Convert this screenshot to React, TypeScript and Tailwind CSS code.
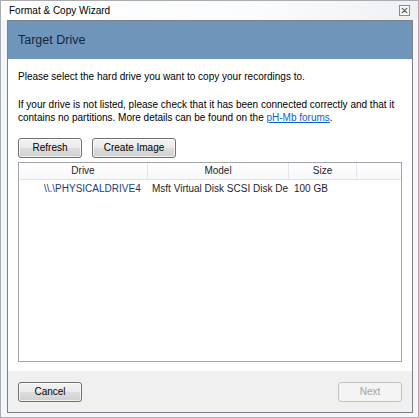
import type { ReactNode } from "react";

type ButtonProps = {
  children: ReactNode;
  width: string;
  disabled?: boolean;
};

// Aero-style push button with the two-tone gradient face
function AeroButton({ children, width, disabled }: ButtonProps) {
  if (disabled) {
    return (
      <button
        disabled
        className={`${width} h-[20px] rounded-[3px] border border-[#c2c2c2] bg-[#f4f4f4] text-[10px] leading-none text-[#a3a3a3]`}
      >
        {children}
      </button>
    );
  }
  return (
    <button
      className={`${width} h-[20px] rounded-[3px] border border-[#707070] bg-[linear-gradient(to_bottom,#f3f3f3_0%,#ebebeb_48%,#dddddd_52%,#cfcfcf_100%)] text-[10px] leading-none text-black shadow-[inset_0_0_0_1px_rgba(255,255,255,0.7)]`}
    >
      {children}
    </button>
  );
}

function CloseBox() {
  return (
    <svg width="11" height="11" viewBox="0 0 11 11" className="block">
      <rect x="0.5" y="0.5" width="10" height="10" fill="#f7f7f7" stroke="#8a8a8a" />
      <path d="M3.2 3.4 L7.8 7.6 M7.8 3.4 L3.2 7.6" stroke="#555" strokeWidth="1.2" strokeLinecap="round" />
    </svg>
  );
}

const columns = [
  { label: "Drive", width: "w-[129px]" },
  { label: "Model", width: "w-[141px]" },
  { label: "Size", width: "w-[68px]" },
];

export default function App() {
  return (
    <div className="flex h-[418px] w-[419px] flex-col border border-[#a9adb2] bg-[#f4f7fa] font-['Liberation_Sans',Arial,sans-serif] text-black">
      {/* title bar */}
      <div className="flex h-[19px] items-center justify-between bg-[linear-gradient(to_right,#ffffff_0%,#fbfcfd_60%,#eef1f4_100%)] pl-[8px] pr-[8px]">
        <span className="text-[10px] leading-none">Format &amp; Copy Wizard</span>
        <CloseBox />
      </div>

      {/* client area */}
      <div className="mb-[4px] ml-[6px] mr-[5px] flex flex-1 flex-col border border-[#7c7f83] bg-white">
        <div className="flex h-[38px] items-center bg-[#6f95bb] px-[10px]">
          <h1 className="text-[12.5px] leading-none text-[#15263a]">Target Drive</h1>
        </div>

        <div className="flex flex-1 flex-col px-[10px] pt-[11px] text-[10px] leading-[13px]">
          <p className="whitespace-nowrap">Please select the hard drive you want to copy your recordings to.</p>
          <p className="mt-[15px] whitespace-nowrap">
            If your drive is not listed, please check that it has been connected correctly and that it
            <br />
            contains no partitions. More details can be found on the{" "}
            <a href="#" className="text-[#0b5fd0] underline">
              pH-Mb forums
            </a>
            .
          </p>

          <div className="mt-[14px] flex gap-[10px]">
            <AeroButton width="w-[64px]">Refresh</AeroButton>
            <AeroButton width="w-[84px]">Create Image</AeroButton>
          </div>

          {/* drive list */}
          <div className="mt-[4px] h-[200px] border border-[#a3a6aa] bg-white">
            <div className="flex h-[17px] border-b border-[#e3e5e8] bg-[linear-gradient(to_bottom,#ffffff,#f7f8fa)]">
              {columns.map((c) => (
                <div
                  key={c.label}
                  className={`${c.width} flex items-center justify-center border-r border-[#e3e5e8] leading-none text-[#1e1e1e]`}
                >
                  {c.label}
                </div>
              ))}
            </div>
            <div className="flex h-[17px] items-center leading-none">
              <div className="w-[129px] pl-[25px] text-[#1c3c78]">\\.\PHYSICALDRIVE4</div>
              <div className="w-[141px] overflow-hidden whitespace-nowrap pl-[4px] text-[#1e1e1e]">
                Msft Virtual Disk SCSI Disk De
              </div>
              <div className="w-[68px] pl-[5px] text-[#1e1e1e]">100 GB</div>
            </div>
          </div>
        </div>

        {/* footer */}
        <div className="mt-[9px] flex h-[41px] items-center justify-between bg-[#f0f0f0] px-[10px]">
          <AeroButton width="w-[64px]">Cancel</AeroButton>
          <AeroButton width="w-[64px]" disabled>
            Next
          </AeroButton>
        </div>
      </div>
    </div>
  );
}
